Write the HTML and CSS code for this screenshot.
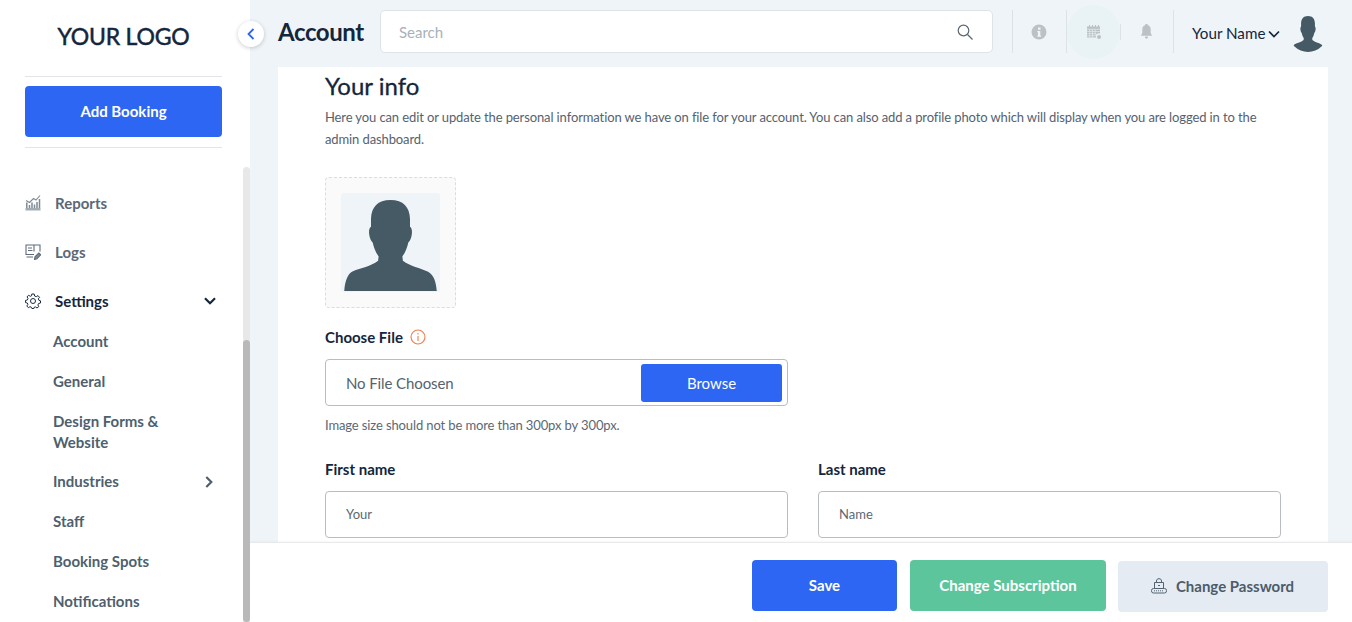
FILE: index.html
```html
<!DOCTYPE html>
<html lang="en">
<head>
  <meta charset="UTF-8" />
  <meta name="viewport" content="width=device-width, initial-scale=1.0"/>
  <title>Account</title>
  <link rel="stylesheet" href="styles.css">
</head>
<body>

  <svg class="defs" width="0" height="0">
    <symbol id="person" viewBox="0 0 100 100" overflow="visible">
      <path d="M50 7C37 7 30.800 14 30.300 26L30.300 34C28.500 35 28 38 28.500 42C29 46 30.500 49 32 50C33 55 35 60 38 64L37.500 68.500C30 74 20 76 12 79C6 82 4 90 3.300 99H96.700C96 90 94 83 88 79.500C80 76 70 74 62.500 68.500L62 64C65 60 67 55 68 50C69.500 49 71 46 71.500 42C72 38 71.500 35 69.700 34L69.700 26C69.200 14 63 7 50 7Z"/>
    </symbol>
  </svg>

  <aside class="sidebar">
    <div class="logo">YOUR LOGO</div>
    <div class="add-wrap">
      <button class="btn btn-blue add-btn">Add Booking</button>
    </div>

    <nav class="menu">
      <a class="menu-item">
        <svg class="menu-icon" viewBox="0 0 16 16" fill="none" stroke="#7d8a94" stroke-width="1.500">
          <path d="M1.800 7.500V13M4.500 10V13M7 7.500V13M9.500 9.500V13M12 7V13M14.500 4V13" />
          <path d="M1 5.500L4.500 7.500L8.500 3.500L11 5L15 .500" stroke-width="1.100"/>
          <path d="M.500 13H15.500V15.500H.500Z" fill="#a3acb3" stroke="none"/>
        </svg>
        <span>Reports</span>
      </a>
      <a class="menu-item">
        <svg class="menu-icon" viewBox="0 0 16 16" fill="none" stroke="#5f6c78" stroke-width="1.100">
          <path d="M9 10.500H1V1H15V7.500M3 4H7M3 6.500H7.500M9 1V7.500M1.500 13H8"/>
          <path d="M9.500 15.500L10 12.800L13.800 9L15.700 10.800L11.900 14.800Z" fill="#7d8a94"/>
        </svg>
        <span>Logs</span>
      </a>
      <a class="menu-item menu-active">
        <svg class="menu-icon" viewBox="0 0 16 16" fill="none" stroke="#1b2c40" stroke-width="1">
          <circle cx="8" cy="8" r="2.500"/>
          <path d="M6.800 1H9.200L9.600 3L11.300 3.700L13 2.600L14.500 4.300L13.300 5.900L14 7.400L15.500 7.800V10L13.600 10.500L12.900 12L13.800 13.600L12 15L10.500 13.900L9.100 14.400L8.900 15.500H6.900L6.500 14.300L5 13.700L3.400 14.700L1.800 13L2.900 11.400L2.300 10L.500 9.600V7.400L2.300 7L3 5.500L2 3.800L3.700 2.300L5.300 3.300L6.500 2.800Z"/>
        </svg>
        <span>Settings</span>
        <svg class="menu-arrow" viewBox="0 0 12 8" fill="none" stroke="#14263c" stroke-width="2.200">
          <path d="M1 1.300L6 6.300L11 1.300"/>
        </svg>
      </a>
      <div class="submenu">
        <a class="sub-item">Account</a>
        <a class="sub-item">General</a>
        <a class="sub-item sub-wrap">Design Forms &amp; Website</a>
        <a class="sub-item sub-arrow">
          <span>Industries</span>
          <svg class="sub-chevron" viewBox="0 0 8 12" fill="none" stroke="#4e5f6e" stroke-width="2.200">
            <path d="M1.300 1L6.300 6L1.300 11"/>
          </svg>
        </a>
        <a class="sub-item">Staff</a>
        <a class="sub-item">Booking Spots</a>
        <a class="sub-item">Notifications</a>
      </div>
    </nav>

    <div class="scroll-track"><div class="scroll-thumb"></div></div>
  </aside>

  <button class="collapse-btn">
    <svg viewBox="0 0 8 12" width="8" height="12" fill="none" stroke="#2d66f3" stroke-width="1.800">
      <path d="M6.500 1L1.500 6L6.500 11"/>
    </svg>
  </button>

  <div class="main">
    <header class="topbar">
      <h1 class="page-title">Account</h1>
      <div class="search">
        <span>Search</span>
        <svg viewBox="0 0 16 16" width="16" height="16" fill="none" stroke="#5a6672" stroke-width="1.200">
          <circle cx="6.500" cy="6.500" r="5.300"/>
          <path d="M10.500 10.500L15.500 15.500"/>
        </svg>
      </div>
      <div class="top-icons">
        <div class="top-icon top-icon-first">
          <svg viewBox="0 0 16 16" width="16" height="16">
            <circle cx="8" cy="8" r="7.500" fill="#bcc1c5"/>
            <path d="M7 3.500H9.500V5.700H7ZM6.300 7H9.300V11.500H10V12.800H6.300V11.500H7V8.300H6.300Z" fill="#eff4f9"/>
          </svg>
        </div>
        <div class="top-icon top-icon-on">
          <svg viewBox="0 0 14 14" width="14" height="14" fill="#bcc1c5">
            <path d="M0 1.500H2V0H3V1.500H5V0H6V1.500H8V0H9V1.500H11V0H12V1.500H13V8.500A3 3 0 0 0 9 12.500H0Z"/>
            <circle cx="12" cy="12" r="2"/>
            <path d="M0 4.300H13M0 6.500H13M0 8.700H9M0 10.800H8M2.800 4V12.500M5.500 4V12.500M8.200 4V11" stroke="#e9f2f5" stroke-width=".6"/>
          </svg>
        </div>
        <div class="top-icon top-icon-short">
          <svg viewBox="0 0 14 16" width="13" height="15" fill="#bcc1c5">
            <path d="M7 0C8 0 8.500 .500 8.500 1.300C10.500 2 11.500 3.500 11.500 5.500V9.500L13 12.500H1L2.500 9.500V5.500C2.500 3.500 3.500 2 5.500 1.300C5.500 .500 6 0 7 0ZM5.300 13.500H8.700C8.700 15 8 15.800 7 15.800C6 15.800 5.300 15 5.300 13.500Z"/>
          </svg>
        </div>
      </div>
      <div class="user">
        <span>Your Name</span>
        <svg class="user-arrow" viewBox="0 0 12 8" width="12" height="8" fill="none" stroke="#14263c" stroke-width="1.700">
          <path d="M1 1.500L6 6.500L11 1.500"/>
        </svg>
        <svg class="user-photo" viewBox="-4 1.900 108 97" preserveAspectRatio="none"><use href="#person" width="100" height="100"/></svg>
      </div>
    </header>

    <main class="content">
      <div class="card">
        <h2>Your info</h2>
        <p class="intro">Here you can edit or update the personal information we have on file for your account. You can also add a profile photo which will display when you are logged in to the admin dashboard.</p>

        <div class="photo-box">
          <div class="photo">
            <svg viewBox="0 0 100 100"><use href="#person"/></svg>
          </div>
        </div>

        <label class="field-label choose-label">
          Choose File
          <svg viewBox="0 0 16 16" width="16" height="16" fill="none" stroke="#ee7f4c" stroke-width="1.100">
            <circle cx="8" cy="8" r="7"/>
            <path d="M8 7V12M8 4V5.400"/>
          </svg>
        </label>
        <div class="file-box">
          <span>No File Choosen</span>
          <button class="browse">Browse</button>
        </div>
        <p class="hint">Image size should not be more than 300px by 300px.</p>

        <div class="name-row">
          <div>
            <label class="field-label">First name</label>
            <input class="text-input" type="text" value="Your" />
          </div>
          <div>
            <label class="field-label">Last name</label>
            <input class="text-input" type="text" value="Name" />
          </div>
        </div>
      </div>
    </main>

    <footer class="footer">
      <button class="btn btn-blue save-btn">Save</button>
      <button class="btn btn-green sub-btn">Change Subscription</button>
      <button class="btn btn-grey pass-btn">
        <svg viewBox="0 0 16 16" width="16" height="16" fill="none" stroke="#55626f" stroke-width="1">
          <path d="M5.500 4.500V3C5.500 1.500 6.500 .700 8 .700C9.500 .700 10.500 1.500 10.500 3V4.500M3.500 4.500H12.500V10.500H3.500ZM7 7.500H9"/>
          <rect x=".500" y="10.500" width="15" height="4.500" rx="2"/>
          <path d="M3 12.800H13" stroke-dasharray="1 1"/>
        </svg>
        Change Password
      </button>
    </footer>
  </div>

</body>
</html>
```

FILE: styles.css
```css
* {
  box-sizing: border-box;
  margin: 0;
  padding: 0;
}

html,
body {
  height: 100%;
  overflow: hidden;
}

body {
  font-family: 'Lato', 'Liberation Sans', sans-serif;
  background-color: #eff4f9;
  color: #14263c;
  display: flex;
  position: relative;
}

.defs {
  position: absolute;
}

button {
  font-family: inherit;
  border: none;
}

/* sidebar */
.sidebar {
  width: 250px;
  flex-shrink: 0;
  background-color: white;
  padding: 0 28px 0 25px;
  position: relative;
  overflow: hidden;
}

.logo {
  height: 76px;
  line-height: 73px;
  text-align: center;
  font-size: 23px;
  letter-spacing: -0.2px;
  -webkit-text-stroke: 0.5px #14263c;
  color: #14263c;
}

.add-wrap {
  border-top: 1px solid #e3e4e8;
  border-bottom: 1px solid #e3e4e8;
  padding: 9px 0 10px;
}

.btn {
  height: 51px;
  padding-bottom: 2px;
  border-radius: 4px;
  font-size: 15px;
  font-weight: 700;
  color: white;
}

.btn-blue {
  background-color: #2d66f3;
}

.btn-green {
  background-color: #5dc59c;
}

.btn-grey {
  background-color: #e4ebf3;
  color: #4e5b69;
}

.add-btn {
  display: block;
  width: 100%;
}

.menu {
  margin-top: 30px;
}

.menu-item {
  display: flex;
  align-items: center;
  height: 49px;
  font-size: 15px;
  font-weight: 700;
  color: #5b6875;
}

.menu-icon {
  width: 16px;
  height: 16px;
  margin-right: 14px;
}

.menu-active {
  color: #14263c;
}

.menu-arrow {
  width: 12px;
  height: 8px;
  margin-left: auto;
  margin-right: 6px;
}

.submenu {
  padding-left: 28px;
  margin-top: -3px;
}

.sub-item {
  display: flex;
  align-items: center;
  justify-content: space-between;
  padding: 9px 24px 9px 0;
  margin-bottom: 1px;
  font-size: 15px;
  line-height: 21px;
  font-weight: 700;
  color: #4e5f6e;
}

.sub-wrap {
  margin-bottom: 0;
}

.sub-arrow {
  padding-right: 9px;
}

.sub-chevron {
  width: 8px;
  height: 12px;
}

.scroll-track {
  position: absolute;
  top: 167px;
  right: 0;
  bottom: 0;
  width: 7px;
  border-radius: 4px 4px 0 0;
  background-color: #e8e8e8;
}

.scroll-thumb {
  position: absolute;
  top: 173px;
  left: 0;
  right: 0;
  bottom: 0;
  border-radius: 4px;
  background-color: #b9b9b9;
}

.collapse-btn {
  position: absolute;
  top: 21px;
  left: 238px;
  width: 26px;
  height: 26px;
  border-radius: 50%;
  background-color: white;
  box-shadow: 0 1px 4px rgba(0, 0, 0, 0.2);
  display: flex;
  align-items: center;
  justify-content: center;
}

/* top bar */
.main {
  flex: 1;
  min-width: 0;
  display: flex;
  flex-direction: column;
}

.topbar {
  height: 67px;
  flex-shrink: 0;
  display: flex;
  align-items: flex-start;
  padding-left: 28px;
}

.page-title {
  width: 102px;
  font-size: 24px;
  letter-spacing: -0.4px;
  line-height: 30px;
  margin-top: 17px;
  font-weight: 700;
  color: #14263c;
}

.search {
  width: 613px;
  height: 43px;
  margin-top: 10px;
  background-color: white;
  border: 1px solid #dfe3e8;
  border-radius: 5px;
  display: flex;
  align-items: center;
  justify-content: space-between;
  padding: 0 19px 0 18px;
  font-size: 15px;
  color: #a9b1b9;
}

.top-icons {
  display: flex;
  margin-left: 19px;
  margin-top: 10px;
  border-left: 1px solid #dde2e7;
}

.top-icon {
  width: 54px;
  height: 43px;
  display: flex;
  align-items: center;
  justify-content: center;
  border-right: 1px solid #dde2e7;
}

.top-icon-first {
  padding-right: 2px;
}

.top-icon-on {
  position: relative;
  width: 53px;
  border-right: none;
}

.top-icon-on::before {
  content: "";
  position: absolute;
  top: -5px;
  left: 0;
  width: 53px;
  height: 54px;
  border-radius: 50%;
  background-color: #e9f2f5;
}

.top-icon-on svg {
  position: relative;
}

.top-icon-short {
  position: relative;
}

.top-icon-short::before {
  content: "";
  position: absolute;
  left: 0;
  top: 14px;
  height: 16px;
  border-left: 1px solid #dde2e7;
}

.user {
  display: flex;
  align-items: center;
  height: 43px;
  margin-top: 11px;
  margin-left: 18px;
  font-size: 15.2px;
  color: #14263c;
}

.user-arrow {
  margin-left: 3px;
  margin-top: 2px;
}

.user-photo {
  width: 38px;
  height: 38px;
  margin-left: 9px;
  margin-top: 1px;
  border-radius: 50%;
  fill: #455a64;
}

/* content */
.content {
  flex: 1;
  min-height: 0;
  overflow: hidden;
  padding: 0 24px 0 28px;
}

.card {
  height: 100%;
  background-color: white;
  padding: 4px 47px 0;
}

.card h2 {
  font-size: 24px;
  line-height: 30px;
  font-weight: 400;
  -webkit-text-stroke: 0.3px #14263c;
  color: #14263c;
}

.intro {
  margin-top: 5px;
  font-size: 13px;
  letter-spacing: -0.11px;
  line-height: 22px;
  color: #55626f;
}

.photo-box {
  width: 131px;
  height: 131px;
  margin-top: 27px;
  padding: 15px;
  background-color: #fafafa;
  border: 1px dashed #dcdcdc;
  border-radius: 4px;
}

.photo {
  width: 99px;
  height: 99px;
  background-color: #eff4f9;
  border-radius: 3px;
}

.photo svg {
  display: block;
  width: 100%;
  height: 100%;
  fill: #455a64;
}

.field-label {
  display: flex;
  align-items: center;
  gap: 7px;
  font-size: 15px;
  line-height: 20px;
  font-weight: 700;
  color: #14263c;
}

.choose-label {
  margin-top: 19px;
}

.file-box {
  height: 47px;
  margin-top: 12px;
  width: 463px;
  border: 1px solid #b9bcc0;
  border-radius: 4px;
  display: flex;
  align-items: center;
  justify-content: space-between;
  padding: 0 5px 0 20px;
  font-size: 15px;
  letter-spacing: -0.1px;
  color: #55626f;
}

.browse {
  width: 141px;
  height: 38px;
  background-color: #2d66f3;
  border-radius: 3px;
  color: white;
  font-size: 15px;
}

.hint {
  margin-top: 10px;
  font-size: 13px;
  letter-spacing: -0.12px;
  line-height: 18px;
  color: #5b6875;
}

.name-row {
  display: grid;
  grid-template-columns: 463px 463px;
  gap: 30px;
  margin-top: 25px;
}

.text-input {
  display: block;
  width: 100%;
  height: 47px;
  margin-top: 12px;
  padding: 0 20px 2px;
  border: 1px solid #b9bcc0;
  border-radius: 4px;
  font-family: inherit;
  font-size: 13px;
  color: #5b6875;
}

/* bottom bar */
.footer {
  height: 80px;
  flex-shrink: 0;
  background-color: white;
  border-top: 1px solid #e8e9eb;
  box-shadow: 0 -1px 2px rgba(0, 0, 0, 0.03);
  display: flex;
  justify-content: flex-end;
  gap: 13px;
  padding: 17px 24px 0 0;
}

.save-btn {
  width: 145px;
}

.sub-btn {
  width: 196px;
}

.pass-btn {
  width: 210px;
  margin-left: -1px;
  margin-top: 1px;
  padding-right: 1px;
  display: flex;
  align-items: center;
  justify-content: center;
  gap: 9px;
}
```
